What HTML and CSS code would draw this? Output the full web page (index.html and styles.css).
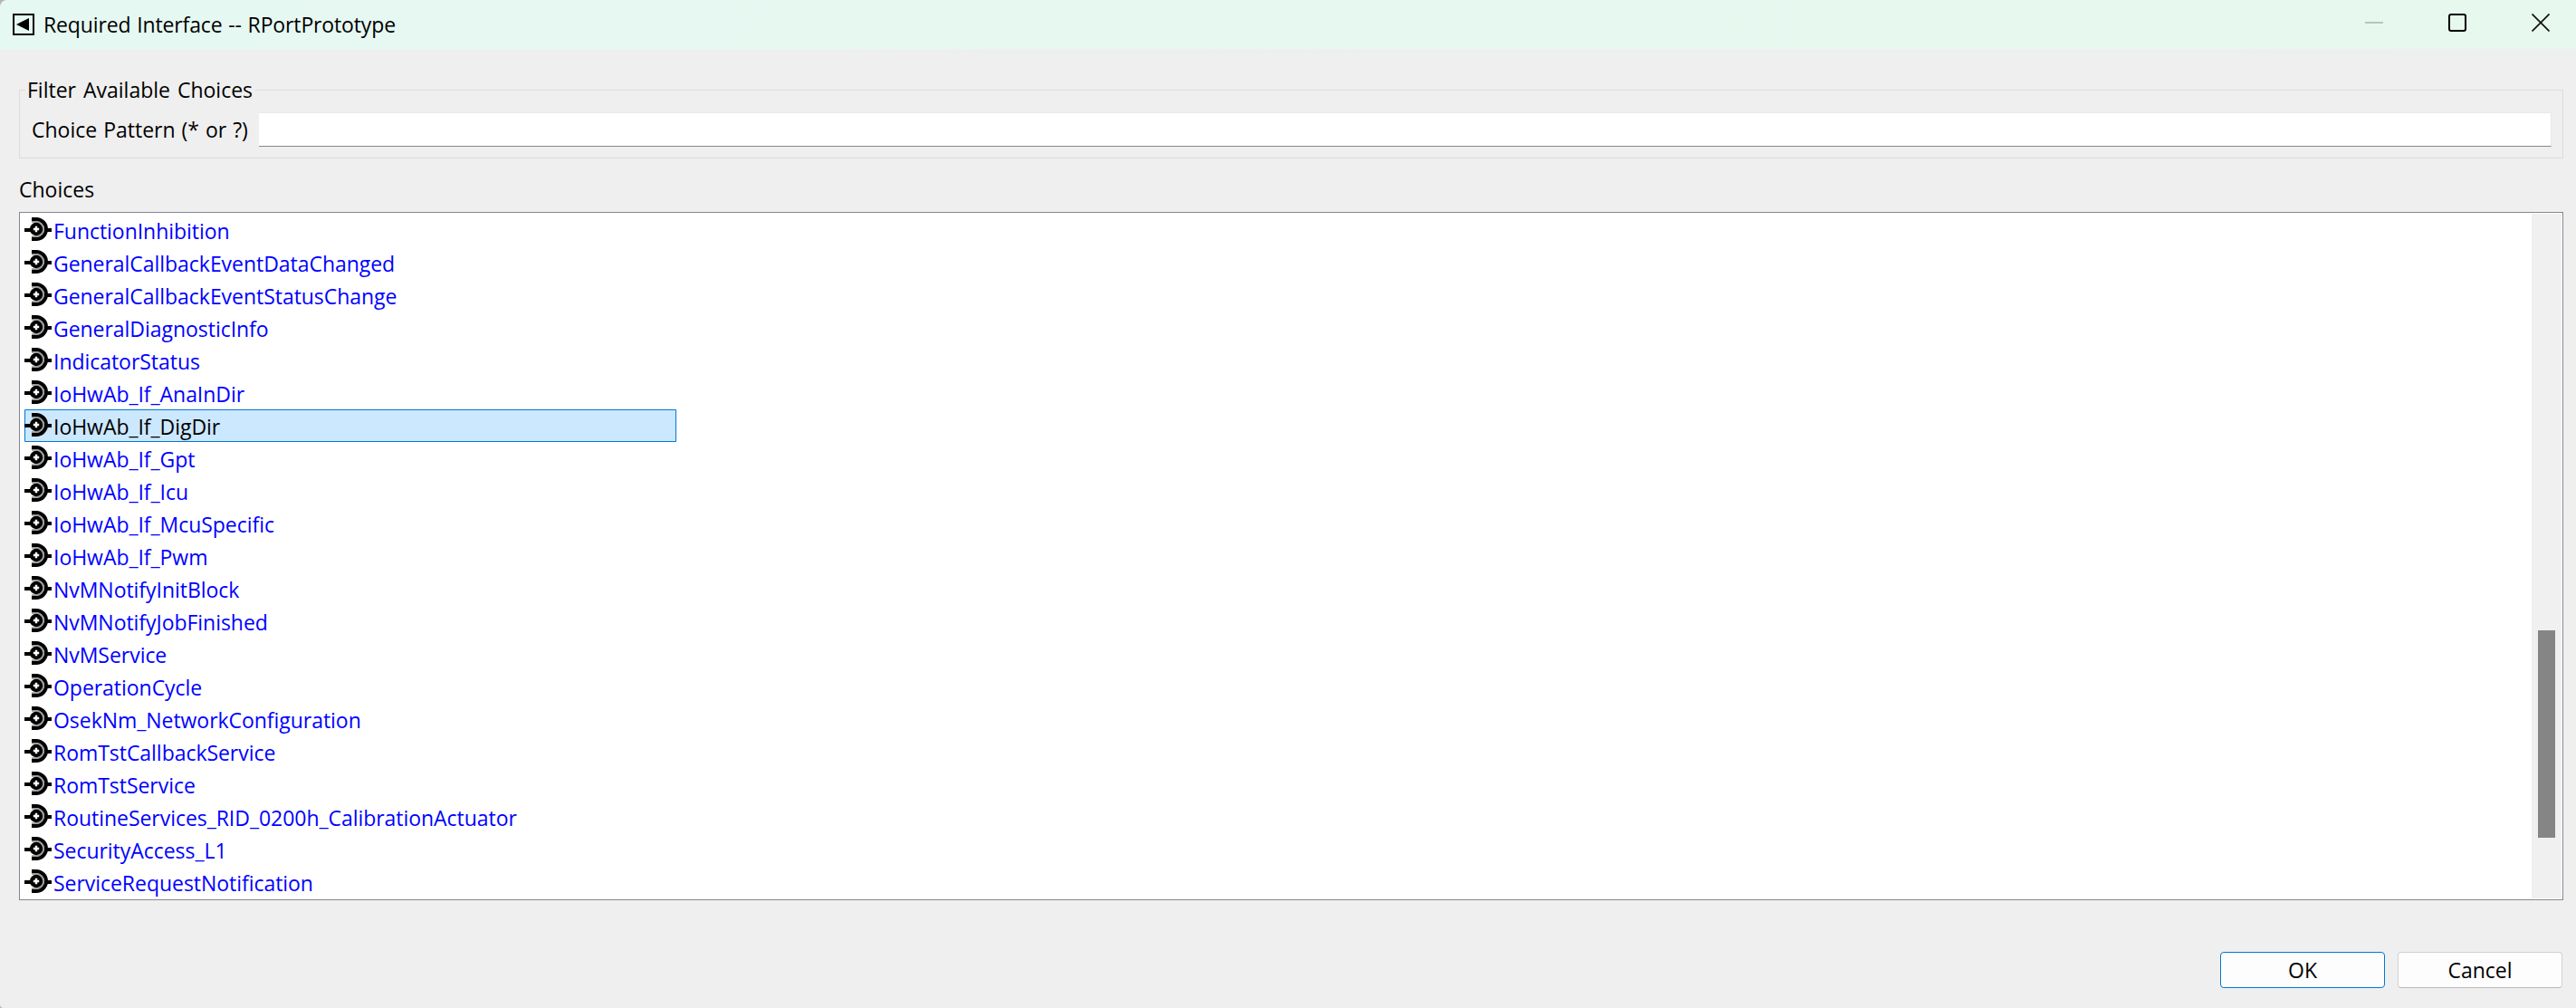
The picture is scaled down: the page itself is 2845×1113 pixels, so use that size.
FILE: index.html
```html
<!DOCTYPE html>
<html lang="en">
<head>
  <meta charset="UTF-8" />
  <title>Required Interface -- RPortPrototype</title>
  <link rel="stylesheet" href="styles.css">
</head>
<body>
  <svg class="defs">
    <symbol id="port" viewBox="0 0 30 26">
      <path d="M0 14h8M24 14h6" stroke="#000" stroke-width="4" />
      <path d="M8 2h5a11 11 0 0 1 0 22h-5" fill="none" stroke="#000" stroke-width="4" />
      <path d="M8 4.9h5a8.1 8.1 0 0 1 0 16.2h-5" fill="none" stroke="#999" stroke-width="1.8" />
      <circle cx="13" cy="13" r="7.2" fill="#000" />
      <path d="M13 9.8v6.4M9.8 13h6.4" stroke="#fff" stroke-width="2.4" />
    </symbol>
  </svg>

  <header class="titlebar">
    <svg class="app-icon" width="24" height="24" viewBox="0 0 24 24">
      <rect x="1" y="1" width="22" height="22" fill="none" stroke="#000" stroke-width="2" />
      <path d="M4 12L18 5v14z" />
    </svg>
    <h1 class="title">Required Interface -- RPortPrototype</h1>
    <div class="window-buttons">
      <svg width="20" height="20" viewBox="0 0 20 20"><path d="M0 10h20" stroke="#b7c6bd" stroke-width="2" /></svg>
      <svg width="20" height="20" viewBox="0 0 20 20"><rect x="1" y="1" width="18" height="18" rx="2" fill="none" stroke="#000" stroke-width="2" /></svg>
      <svg width="20" height="20" viewBox="0 0 20 20"><path d="M.5 .5l19 19M19.5 .5l-19 19" stroke="#111" stroke-width="1.7" /></svg>
    </div>
  </header>

  <main class="dialog">
    <fieldset class="filter">
      <legend>Filter Available Choices</legend>
      <label for="pattern">Choice Pattern (* or ?)</label>
      <input type="text" id="pattern" />
    </fieldset>

    <h2 class="choices-label">Choices</h2>
    <div class="choices">
      <ul class="list">
        <li><svg><use href="#port" /></svg><span>FunctionInhibition</span></li>
        <li><svg><use href="#port" /></svg><span>GeneralCallbackEventDataChanged</span></li>
        <li><svg><use href="#port" /></svg><span>GeneralCallbackEventStatusChange</span></li>
        <li><svg><use href="#port" /></svg><span>GeneralDiagnosticInfo</span></li>
        <li><svg><use href="#port" /></svg><span>IndicatorStatus</span></li>
        <li><svg><use href="#port" /></svg><span>IoHwAb_If_AnaInDir</span></li>
        <li class="selected"><svg><use href="#port" /></svg><span>IoHwAb_If_DigDir</span></li>
        <li><svg><use href="#port" /></svg><span>IoHwAb_If_Gpt</span></li>
        <li><svg><use href="#port" /></svg><span>IoHwAb_If_Icu</span></li>
        <li><svg><use href="#port" /></svg><span>IoHwAb_If_McuSpecific</span></li>
        <li><svg><use href="#port" /></svg><span>IoHwAb_If_Pwm</span></li>
        <li><svg><use href="#port" /></svg><span>NvMNotifyInitBlock</span></li>
        <li><svg><use href="#port" /></svg><span>NvMNotifyJobFinished</span></li>
        <li><svg><use href="#port" /></svg><span>NvMService</span></li>
        <li><svg><use href="#port" /></svg><span>OperationCycle</span></li>
        <li><svg><use href="#port" /></svg><span>OsekNm_NetworkConfiguration</span></li>
        <li><svg><use href="#port" /></svg><span>RomTstCallbackService</span></li>
        <li><svg><use href="#port" /></svg><span>RomTstService</span></li>
        <li><svg><use href="#port" /></svg><span>RoutineServices_RID_0200h_CalibrationActuator</span></li>
        <li><svg><use href="#port" /></svg><span>SecurityAccess_L1</span></li>
        <li><svg><use href="#port" /></svg><span>ServiceRequestNotification</span></li>
      </ul>
      <div class="scrollbar"><div class="thumb"></div></div>
    </div>

    <div class="actions">
      <button class="default">OK</button>
      <button>Cancel</button>
    </div>
  </main>
</body>
</html>
```

FILE: styles.css
```css
* {
  box-sizing: border-box;
}

html {
  background-color: #b5b5b5;
}

body {
  margin: 0;
  height: 1113px;
  overflow: hidden;
  font-family: "Open Sans", "Noto Sans", sans-serif;
  font-size: 23px;
  line-height: 32px;
  color: #000;
  background-color: #efefef;
  border-radius: 8px 0 0 4px;
}

.defs {
  display: none;
}

.titlebar {
  display: flex;
  align-items: center;
  height: 54px;
  padding: 0 29px 0 14px;
  background: linear-gradient(90deg, #e6f8f2, #e7f8ee);
  border-top-left-radius: 8px;
}

.title {
  margin: -1px 0 0 10px;
  font-size: 23px;
  font-weight: 400;
  letter-spacing: -0.14px;
  word-spacing: 1px;
}

.window-buttons {
  display: flex;
  gap: 72px;
  margin: 0 0 4px auto;
}

.dialog {
  display: flex;
  flex-direction: column;
  padding: 29px 14px 0 21px;
}

.filter {
  display: flex;
  align-items: center;
  height: 92px;
  min-width: 0;
  margin: 0;
  padding: 9px 12px 0 13px;
  border: 1px solid #dcdcdc;
  word-spacing: 2px;
}

.filter legend {
  height: 32px;
  margin-left: -7px;
  padding: 0 3px 0 2px;
}

.filter label {
  width: 251px;
  white-space: nowrap;
  word-spacing: 1px;
}

.filter input {
  flex: 1;
  height: 38px;
  border: 1px solid #e8e8e8;
  border-left: 0;
  border-bottom-color: #868686;
  outline: none;
}

.choices-label {
  margin: 18px 0 9px;
  font-size: 23px;
  font-weight: 400;
}

.choices {
  display: flex;
  justify-content: space-between;
  height: 760px;
  padding: 1px;
  border: 1px solid #828790;
  background-color: #fff;
}

.list {
  width: 720px;
  margin: 0 0 0 4px;
  padding: 0;
  list-style: none;
  color: #00f;
  letter-spacing: -0.04px;
}

.list li {
  display: flex;
  gap: 2px;
  height: 36px;
  white-space: nowrap;
}

.list svg {
  flex: none;
  width: 30px;
  height: 26px;
  margin-top: 4px;
}

.list span {
  padding-top: 3px;
}

.list .selected {
  color: #000;
  background-color: #cce8ff;
  box-shadow: inset 0 0 0 1px #0078d7;
  border-radius: 1px;
}

.scrollbar {
  width: 33px;
  padding: 460px 7px 0;
  background-color: #f0f0f0;
}

.thumb {
  height: 229px;
  background-color: #858585;
}

.actions {
  display: flex;
  justify-content: flex-end;
  gap: 14px;
  margin: 57px 1px 0 0;
}

button {
  width: 182px;
  height: 40px;
  padding: 0;
  font: inherit;
  color: #000;
  background-color: #fdfdfd;
  border: 1px solid #d0d0d0;
  border-bottom-color: #bababa;
  border-radius: 4px;
}

button.default {
  border-color: #0078d4;
}
```
